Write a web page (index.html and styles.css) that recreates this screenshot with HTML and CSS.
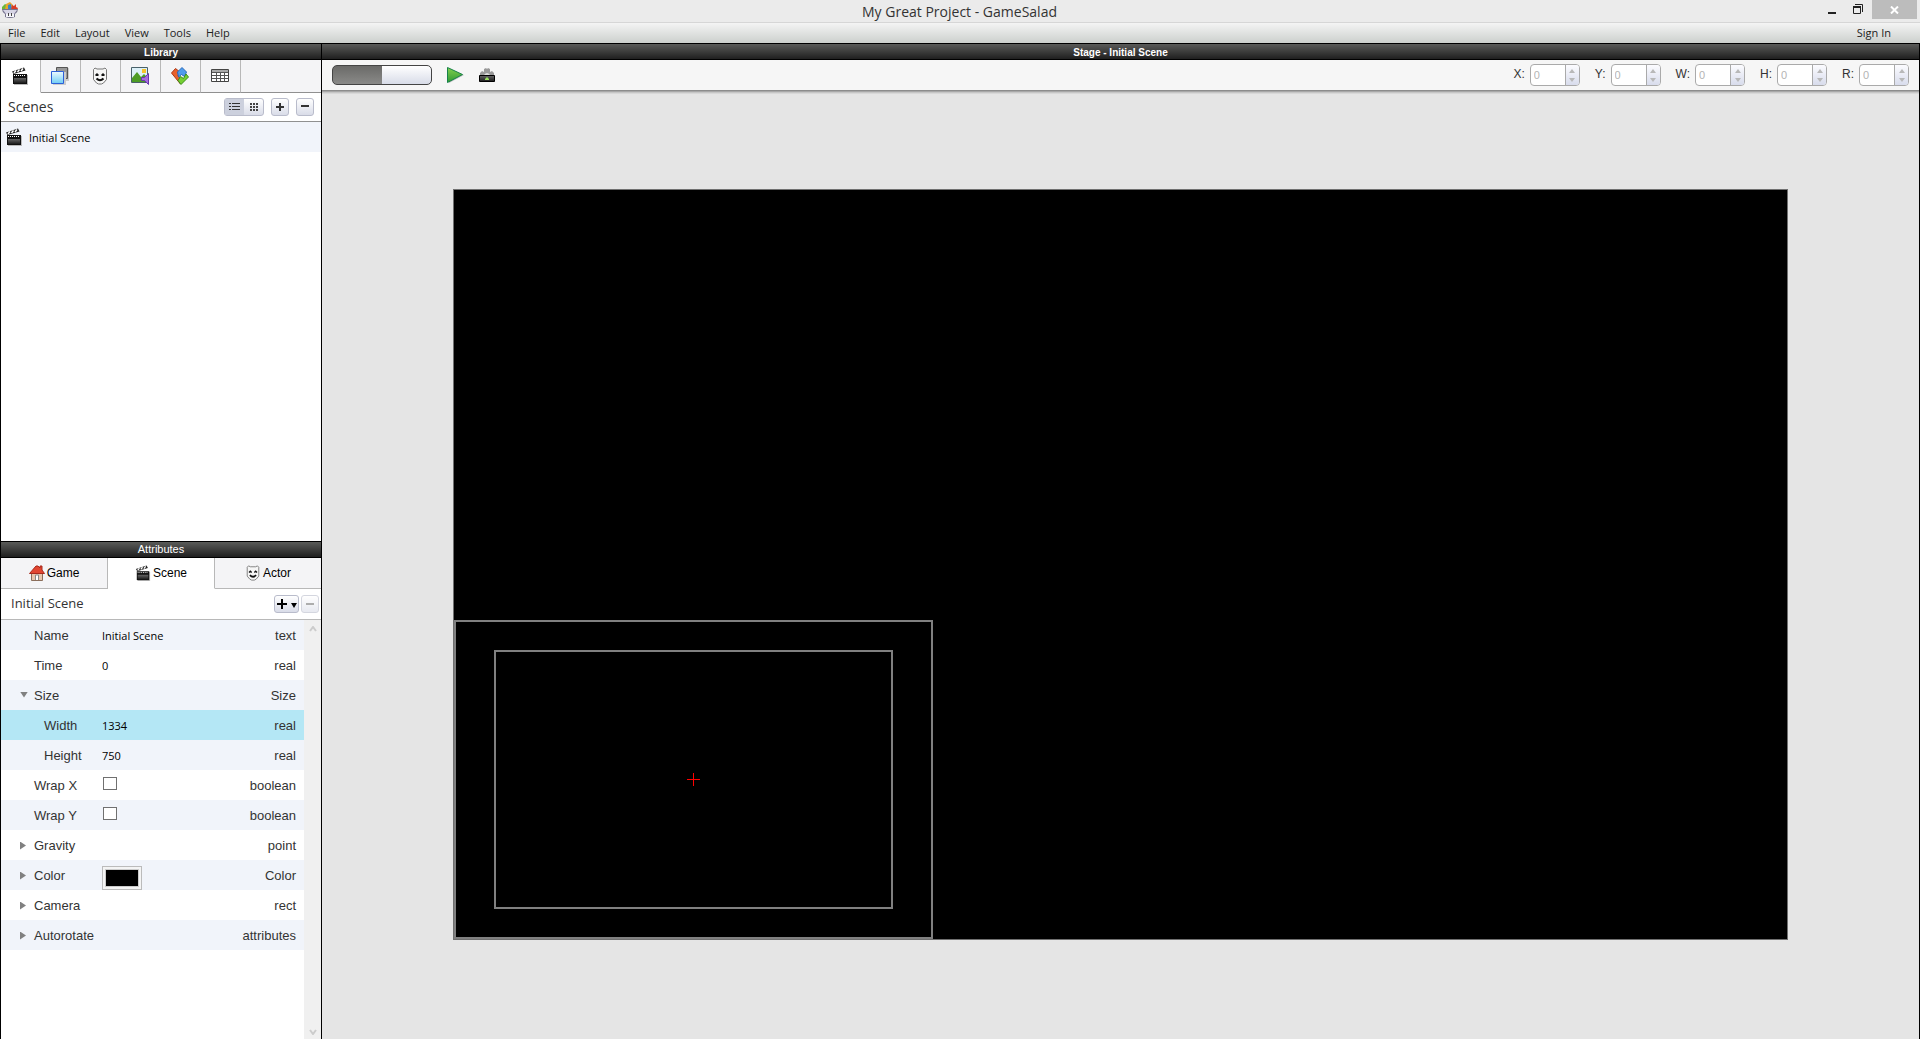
FILE: index.html
```html
<!DOCTYPE html>
<html lang="en">
<head>
<meta charset="utf-8">
<title>My Great Project - GameSalad</title>
<link rel="stylesheet" href="styles.css">
</head>
<body>
<svg class="defs" aria-hidden="true">
  <defs>
    <linearGradient id="dark" x1="0" y1="0" x2="0" y2="1"><stop offset="0" stop-color="#666"/><stop offset="1" stop-color="#1c1c1c"/></linearGradient>
    <linearGradient id="sky" x1="0" y1="0" x2="0" y2="1"><stop offset="0" stop-color="#eefaff"/><stop offset="1" stop-color="#6fcdf5"/></linearGradient>
    <linearGradient id="leaf" x1="0" y1="0" x2="0" y2="1"><stop offset="0" stop-color="#83d04f"/><stop offset="1" stop-color="#2f9a35"/></linearGradient>
  </defs>
  <symbol id="clapper" viewBox="0 0 16 18">
    <path d="M2 8h14v10H2z" fill="#bbb"/>
    <path d="M1 7h14v10H1z" fill="#111"/>
    <path d="M2 11h12v5H2z" fill="url(#dark)"/>
    <path d="M2 8.500h12" stroke="#fff" stroke-dasharray="1 1"/>
    <path d="M0 4.500L12 .5l1.500 3L1.500 7z" fill="#222"/>
    <path d="M2 6l2-2.500M5.500 5l2-2.500M9 4l2-2.500" stroke="#fff" stroke-width="1.500"/>
  </symbol>
  <symbol id="mask" viewBox="0 0 16 18">
    <path d="M1.500 2.500l1.500-1.500 2 1h6l2-1 1.500 1.500v10l-3 3.500-2 1h-3l-2-1-3-3.500z" fill="#f6f6f6" stroke="#777"/>
    <path d="M3.500 8.500l1.500-1.500 1.500 1.500M9.500 8.500l1.500-1.500 1.500 1.500" fill="none" stroke="#111" stroke-width="1.500"/>
    <path d="M4.500 11.500q3.500 3.500 7 0" fill="none" stroke="#111" stroke-width="2"/>
  </symbol>
</svg>

<header class="titlebar">
  <svg class="logo" viewBox="0 0 16 17" aria-hidden="true">
    <path d="M0 8V5l3-3 2 1v5z" fill="#69b83b"/><path d="M3 8l1-6 4-2 3 3-1 5z" fill="#e9a52a"/><path d="M6 8V3l3-1 1 6z" fill="#3684c8"/><path d="M9 8l1-5 2 1 2-2v3l2 1-1 2z" fill="#d83b25"/>
    <path d="M0 7h16q0 3-3 5v3q-5 2-10 0v-3q-3-2-3-5z" fill="#77748f"/><path d="M1 8h14l-3 4H4z" fill="#d7d5e5"/><path d="M4 12h8v3H4z" fill="#f5f5fa"/><path d="M6.500 11v3M9.500 11v3" stroke="#444"/>
  </svg>
  <h1>My Great Project - GameSalad</h1>
  <div class="window-buttons">
    <button aria-label="Minimize"><svg width="8" height="10"><path d="M0 8h8v2H0z" fill="#222"/></svg></button>
    <button aria-label="Restore"><svg width="10" height="10"><path d="M2 .5h7.500V8M.5 3v6.500h7V3z" fill="none" stroke="#222"/><path d="M0 2h8v2H0z" fill="#222"/></svg></button>
    <button class="close" aria-label="Close"><svg width="9" height="8"><path d="M1 .5l7 7M8 .5l-7 7" stroke="#fff" stroke-width="2"/></svg></button>
  </div>
</header>

<nav class="menubar">
  <button>File</button><button>Edit</button><button>Layout</button><button>View</button><button>Tools</button><button>Help</button>
  <a href="#signin">Sign In</a>
</nav>

<main class="workspace">
  <aside class="sidebar">
    <section class="panel">
      <h2 class="bar">Library</h2>
      <div class="tabs library-tabs">
        <button class="active" aria-label="Scenes"><svg width="16" height="18"><use href="#clapper"/></svg></button>
        <button aria-label="Layers"><svg width="18" height="18"><path d="M6 1h12v13H6z" fill="#ccc"/><path d="M5.500.5h11v11h-11z" fill="#999" stroke="#555"/><path d="M2 5h13v13H2z" fill="#ccc"/><path d="M.5 4.500h12v12H.5z" fill="url(#sky)" stroke="#2d60d8"/></svg></button>
        <button aria-label="Actors"><svg width="16" height="18"><use href="#mask"/></svg></button>
        <button aria-label="Media"><svg width="18" height="18"><path d="M.5.5h16v15H.5z" fill="#dcf0f8" stroke="#49616a"/><path d="M11 2h4v4h-4z" fill="#f7c32c"/><path d="M1 11l5-6 4 5 3-3 3 3v5H1z" fill="#4c9c25"/><path d="M10.500 10.500h3l4-4v11l-4-4h-3z" fill="#a66be0" stroke="#6836ac"/></svg></button>
        <button aria-label="Behaviors"><svg width="18" height="18"><path d="M.5 6l4-4.500 5 4-2.500 3 3.500 4.500-1.500 3.500z" fill="#e8602c" stroke="#ad3816"/><path d="M6.500 5l4.500-4.500 4.500 4.500-2 4.500-3-2-3 2.500z" fill="#4f9ceb" stroke="#2868bb"/><path d="M10 17.500l-3-4 2.500-4 3 2 2.500-4.500 2.500 3z" fill="#75cf33" stroke="#3b8f1b"/></svg></button>
        <button aria-label="Tables"><svg width="18" height="14"><path d="M.5.5h17v12H.5z" fill="#fff" stroke="#444"/><path d="M1 1h16v2H1z" fill="#aaa"/><path d="M1 3.500h16M1 6.500h16M1 9.500h16M5.500 4v8M9.500 4v8M13.500 4v8" stroke="#555"/></svg></button>
      </div>
      <div class="scene-head">
        <h3>Scenes</h3>
        <div class="view-toggle">
          <button class="pressed" aria-label="List view"><svg width="11" height="8"><path d="M0 .5h2M3 .5h8M0 3.500h2M3 3.500h8M0 6.500h2M3 6.500h8" stroke="#333"/></svg></button>
          <button aria-label="Grid view"><svg width="8" height="8"><path d="M0 1h8M0 4h8M0 7h8" stroke="#444" stroke-width="2" stroke-dasharray="2 1"/></svg></button>
        </div>
        <button class="small" aria-label="Add scene"><svg width="8" height="8"><path d="M0 4h8M4 0v8" stroke="#333" stroke-width="2"/></svg></button>
        <button class="small" aria-label="Remove scene"><svg width="8" height="8"><path d="M0 3h8" stroke="#333" stroke-width="2"/></svg></button>
      </div>
      <ul class="scene-list">
        <li><svg width="16" height="18"><use href="#clapper"/></svg>Initial Scene</li>
      </ul>
    </section>

    <section class="panel">
      <h2 class="bar light">Attributes</h2>
      <div class="tabs attribute-tabs">
        <button><svg width="16" height="16"><path d="M2.500 8v7.500h11V8" fill="#e8c6ad" stroke="#8b6e5b"/><path d="M6.500 15v-5h3v5" fill="#fff" stroke="#888"/><path d="M.5 8.500L7 1h2l2 2V1h2v4l2.500 3.500z" fill="#e14631" stroke="#a82a1c"/></svg>Game</button>
        <button class="active"><svg width="16" height="16"><use href="#clapper"/></svg>Scene</button>
        <button><svg width="16" height="16"><use href="#mask"/></svg>Actor</button>
      </div>
      <div class="attribute-head">
        <h3>Initial Scene</h3>
        <button class="small add" aria-label="Add attribute"><svg width="20" height="10"><path d="M0 5h10M5 0v10" stroke="#000" stroke-width="2"/><path d="M14 4h6l-3 5z"/></svg></button>
        <button class="small" aria-label="Remove attribute" disabled><svg width="8" height="8"><path d="M0 4h8" stroke="#777" stroke-width="2"/></svg></button>
      </div>
      <div class="attribute-body">
        <table>
          <tbody>
            <tr><th scope="row"><label for="name">Name</label></th><td><input type="text" id="name" value="Initial Scene"></td><td>text</td></tr>
            <tr><th scope="row"><label for="time">Time</label></th><td><input type="text" id="time" value="0"></td><td>real</td></tr>
            <tr class="group open"><th scope="row">Size</th><td></td><td>Size</td></tr>
            <tr class="child selected"><th scope="row"><label for="width">Width</label></th><td><input type="text" id="width" value="1334"></td><td>real</td></tr>
            <tr class="child"><th scope="row"><label for="height">Height</label></th><td><input type="text" id="height" value="750"></td><td>real</td></tr>
            <tr><th scope="row"><label for="wrapx">Wrap X</label></th><td><input type="checkbox" id="wrapx"></td><td>boolean</td></tr>
            <tr><th scope="row"><label for="wrapy">Wrap Y</label></th><td><input type="checkbox" id="wrapy"></td><td>boolean</td></tr>
            <tr class="group"><th scope="row">Gravity</th><td></td><td>point</td></tr>
            <tr class="group"><th scope="row">Color</th><td><button class="swatch" aria-label="Scene color"></button></td><td>Color</td></tr>
            <tr class="group"><th scope="row">Camera</th><td></td><td>rect</td></tr>
            <tr class="group"><th scope="row">Autorotate</th><td></td><td>attributes</td></tr>
          </tbody>
        </table>
        <div class="scrollbar">
          <svg width="8" height="6"><path d="M1 5l3-4 3 4" fill="none" stroke="#ccc" stroke-width="2"/></svg>
          <svg width="8" height="6"><path d="M1 1l3 4 3-4" fill="none" stroke="#ccc" stroke-width="2"/></svg>
        </div>
      </div>
    </section>
  </aside>

  <section class="stage-panel">
    <h2 class="bar">Stage - Initial Scene</h2>
    <div class="toolbar">
      <input type="checkbox" class="switch" aria-label="Layout mode">
      <button class="tool" aria-label="Play"><svg width="18" height="18"><path d="M3 3l15 6-15 8z" fill="#bbb"/><path d="M1.500 1.500l15 7-15 8z" fill="url(#leaf)" stroke="#17824a"/></svg></button>
      <button class="tool" aria-label="Publish"><svg width="16" height="14"><path d="M1 8V5l2-2 2 1V1l2-1 1 1 1-1 2 1v3l2-1 2 2v3z" fill="#999"/><path d="M5 7q3-4 6 0z" fill="#ddd"/><path d="M.5 7.500h15v6H.5z" fill="url(#dark)" stroke="#000"/><path d="M6 11l2-2 2 2v1H6z" fill="#98e05d"/></svg></button>
      <div class="fields">
        <label for="x">X:</label><div class="spin"><input type="text" id="x" value="0" disabled><span></span></div>
        <label for="y">Y:</label><div class="spin"><input type="text" id="y" value="0" disabled><span></span></div>
        <label for="w">W:</label><div class="spin"><input type="text" id="w" value="0" disabled><span></span></div>
        <label for="h">H:</label><div class="spin"><input type="text" id="h" value="0" disabled><span></span></div>
        <label for="r">R:</label><div class="spin"><input type="text" id="r" value="0" disabled><span></span></div>
      </div>
    </div>
    <div class="canvas">
      <div class="stage">
        <div class="camera">
          <div class="tracking">
            <svg width="13" height="13"><path d="M0 6.500h13M6.500 0v13" stroke="#f00"/></svg>
          </div>
        </div>
      </div>
    </div>
  </section>
</main>
</body>
</html>
```
FILE: styles.css
```css
* { box-sizing: border-box; }

body {
  margin: 0;
  height: 100vh;
  display: flex;
  flex-direction: column;
  background: #e5e5e5;
  color: #333;
  font: 12px "Open Sans", "Noto Sans", sans-serif;
}

h1, h2, h3, ul { margin: 0; padding: 0; font-weight: normal; }
svg { display: block; flex: none; }
.defs { position: absolute; width: 0; height: 0; }

button {
  display: flex;
  align-items: center;
  justify-content: center;
  padding: 0;
  border: 0;
  background: none;
  color: inherit;
  font: inherit;
}

input { margin: 0; padding: 0; border: 0; background: none; font: inherit; }

/* Window frame */
.titlebar {
  flex: none;
  display: grid;
  grid-template-columns: 1fr auto 1fr;
  height: 23px;
  padding: 0 3px 0 2px;
  background: #ebebeb;
  border-bottom: 1px solid #d6d6d6;
}
.logo { width: 16px; height: 17px; margin-top: 2px; }
.titlebar h1 { font-size: 14px; line-height: 23px; }
.window-buttons { display: flex; justify-content: flex-end; align-items: flex-start; }
.window-buttons button { width: 26px; height: 18px; }
.window-buttons .close { width: 45px; height: 19px; margin-left: 1px; background: #bcbcbc; }

.menubar {
  flex: none;
  display: flex;
  align-items: center;
  gap: 15px;
  height: 20px;
  padding: 0 29px 2px 8px;
  background: linear-gradient(#f4f4f4, #ccd0cd);
  color: #222;
  font-size: 11px;
}
.menubar a { margin-left: auto; color: inherit; text-decoration: none; }

.workspace { flex: 1; display: flex; min-height: 0; border: solid #000; border-width: 0 1px; }
.sidebar { flex: none; width: 321px; display: flex; flex-direction: column; border-right: 1px solid #000; background: #fff; }
.panel { flex: 1; min-height: 0; display: flex; flex-direction: column; }

.bar {
  flex: none;
  height: 17px;
  border: solid #000;
  border-width: 1px 0;
  background: linear-gradient(#5a5b59, #1f1f1f);
  color: #fff;
  font: bold 10px/17px "Liberation Sans", sans-serif;
  text-align: center;
}
.bar.light { font-size: 11px; font-weight: normal; line-height: 15px; }

/* Tabs */
.tabs { flex: none; display: flex; background: #f4f4f6; }
.tabs button { border: solid #b8b8b8; border-width: 0 1px 1px 0; }
.tabs .active { background: #fff; border-bottom-color: #fff; }
.library-tabs { height: 33px; box-shadow: inset 0 -1px #909090; }
.library-tabs button { width: 40px; padding-right: 2px; border-bottom-color: #909090; }
.attribute-tabs { height: 31px; }
.attribute-tabs button { flex: 1; gap: 2px; color: #000; font: 12px "Liberation Sans", sans-serif; }
.attribute-tabs button:last-child { border-right: 0; }

/* Panel headings */
.scene-head, .attribute-head { flex: none; display: flex; align-items: center; }
.scene-head { height: 29px; padding: 0 7px; border-bottom: 1px solid #909090; }
.attribute-head { height: 31px; padding: 0 2px 0 10px; border-bottom: 1px solid #b8b8b8; gap: 2px; }
.scene-head h3, .attribute-head h3 { margin-right: auto; padding-bottom: 2px; }
.scene-head h3 { font-size: 14px; }
.attribute-head h3 { font-size: 13px; }

.view-toggle, .small {
  height: 18px;
  border: 1px solid #b9bccb;
  border-radius: 3px;
  background: linear-gradient(#fff, #d9dce8);
}
.view-toggle { display: flex; width: 40px; }
.view-toggle button { flex: 1; }
.view-toggle .pressed { background: #ccd0dd; }
.small { width: 18px; }
.scene-head .small { margin-left: 7px; }
.small.add { width: 25px; }
.small:disabled { opacity: 0.6; }

.scene-list { list-style: none; }
.scene-list li { display: flex; align-items: center; gap: 7px; height: 30px; padding-left: 5px; background: #f1f4fa; color: #000; font-size: 11px; }

/* Attribute table */
.attribute-body { flex: 1; display: flex; align-items: stretch; min-height: 0; }
table { flex: 1; align-self: flex-start; table-layout: fixed; border-collapse: collapse; font: 13px "Liberation Sans", sans-serif; }
tr { height: 30px; }
tr:nth-child(odd), tr.child { background: #f1f4fa; }
tr.selected { background: #b4e7f5; }
th, td { padding: 0; font-weight: normal; text-align: left; }
th { width: 101px; padding-left: 33px; }
td:last-child { width: 90px; padding-right: 8px; text-align: right; }
.child th { padding-left: 43px; }
.group th { padding-left: 19px; }
.group th::before {
  content: "";
  display: inline-block;
  width: 6px;
  height: 8px;
  margin-right: 8px;
  background: #808080;
  clip-path: polygon(0 0, 100% 50%, 0 100%);
}
.group.open th::before { width: 8px; height: 6px; margin-right: 6px; clip-path: polygon(0 0, 100% 0, 50% 100%); vertical-align: 2px; }
td input[type="text"] { display: block; width: 100%; color: #000; font: 11px "Open Sans", "Noto Sans", sans-serif; }
td input[type="checkbox"] { appearance: none; display: block; width: 14px; height: 13px; margin: 0 0 3px 1px; border: 1px solid #707070; background: #fff; }
.swatch { width: 40px; height: 24px; margin-top: 5px; border: 1px solid #bbb; background: #f4f4f4; }
.swatch::before { content: ""; width: 32px; height: 16px; border: 1px solid #ccc; background: #000; }

.scrollbar { flex: none; width: 17px; display: flex; flex-direction: column; justify-content: space-between; align-items: center; padding: 6px 0 4px; background: #f0f0f0; }

/* Stage */
.stage-panel { flex: 1; min-width: 0; display: flex; flex-direction: column; }
.toolbar {
  flex: none;
  display: flex;
  align-items: center;
  height: 30px;
  padding: 0 10px;
  background: #f6f6f6;
  box-shadow: 0 1px #8c8c8c, 0 2px #a8a8a8, 0 3px #c6c6c6, 0 4px #d8d8d8;
}
.switch {
  appearance: none;
  width: 100px;
  height: 20px;
  margin-right: 14px;
  border: 1px solid #444;
  border-radius: 5px;
  background: linear-gradient(#6a6a68, #8a8a88) left / 50% 100% no-repeat, linear-gradient(#fff, #d8dce8);
}
.tool { width: 18px; height: 18px; margin-right: 14px; }
.fields { display: flex; align-items: center; margin-left: auto; font: 12px "Liberation Sans", sans-serif; }
.fields label { margin: 0 5px 0 15px; padding-bottom: 2px; }
.spin { display: flex; width: 50px; height: 22px; border: 1px solid #aaa; border-radius: 4px; background: #fff; overflow: hidden; }
.spin input { flex: 1; min-width: 0; padding-left: 3px; color: #b4b4b4; font-size: 11px; }
.spin span {
  display: flex;
  flex-direction: column;
  align-items: center;
  justify-content: center;
  gap: 5px;
  width: 14px;
  border-left: 1px solid #aaa;
  background: linear-gradient(#fcfcff, #d8dcec);
}
.spin span::before, .spin span::after { content: ""; border: solid transparent; border-width: 0 3px 4px; border-bottom-color: #b8b8b8; }
.spin span::after { border-width: 4px 3px 0; border-top-color: #b8b8b8; }

.canvas { flex: 1; display: flex; align-items: center; padding: 0 131px; min-height: 0; }
.stage { position: relative; flex: 1; aspect-ratio: 1335 / 751; border: 1px solid #707070; background: #000; }
.camera {
  position: absolute;
  left: 0;
  bottom: 0;
  width: 35.93%;
  height: 42.59%;
  display: flex;
  padding: 28px 38px;
  border: 2px solid #808080;
}
.tracking { flex: 1; display: flex; align-items: center; justify-content: center; border: 2px solid #808080; }
```
